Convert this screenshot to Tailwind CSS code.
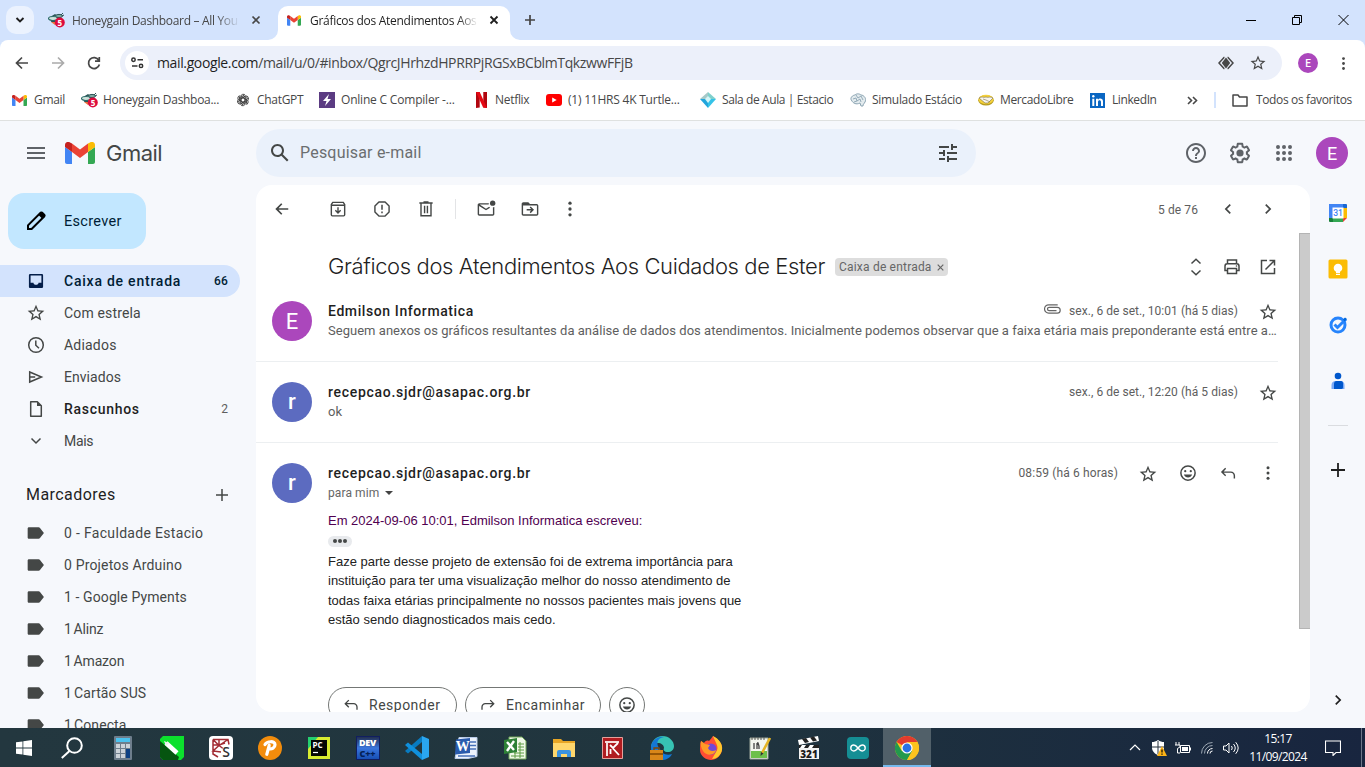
<!DOCTYPE html>
<html lang="pt-BR">
<head>
<meta charset="utf-8">
<title>Gmail</title>
<script src="https://cdn.jsdelivr.net/npm/@tailwindcss/browser@4"></script>
</head>
<body class="w-[1365px] h-[767px] overflow-hidden flex flex-col bg-[#f6f8fc] font-[Roboto,sans-serif] text-[#444746]">
<svg class="hidden">
  <symbol id="gmail" viewBox="0 0 30 22"><path fill="#4285f4" d="M2 22h5V10L0 5v15c0 1.100.9 2 2 2z"/><path fill="#34a853" d="M23 22h5c1.100 0 2-.9 2-2V5l-7 5z"/><path fill="#fbbc04" d="M23 1.500V10l7-5V3c0-2.800-3-4-5-2.600z"/><path fill="#ea4335" d="M7 10V1.500l8 6 8-6V10l-8 6z"/><path fill="#c5221f" d="M0 3v2l7 5V1.500L5 .4C3-1 0 .2 0 3z"/></symbol>
  <symbol id="star" viewBox="0 0 24 24"><path d="M22 9.240l-7.190-.62L12 2 9.190 8.630 2 9.240l5.460 4.730L5.820 21 12 17.270 18.180 21l-1.630-7.030L22 9.240zM12 15.400l-3.760 2.270 1-4.280-3.320-2.880 4.380-.38L12 6.100l1.710 4.040 4.380.38-3.320 2.880 1 4.280L12 15.400z"/></symbol>
  <symbol id="label" viewBox="0 0 24 24"><path d="M3.500 5h11.600c.7 0 1.300.3 1.700.9L21.500 12l-4.700 6.100c-.4.600-1 .9-1.700.9H3.500c-1.100 0-1.500-.9-1.500-1.500v-11C2 5.700 2.600 5 3.500 5z"/></symbol>
  <symbol id="more" viewBox="0 0 24 24"><circle cx="12" cy="5" r="2"/><circle cx="12" cy="12" r="2"/><circle cx="12" cy="19" r="2"/></symbol>
  <symbol id="back" viewBox="0 0 24 24"><path d="M19.500 11H7.830l4.590-4.590L11 5l-7 7 7 7 1.410-1.410L7.830 13H19.500v-2z"/></symbol>
  <symbol id="smile" viewBox="0 0 24 24"><path d="M12 1.500a10.500 10.500 0 100 21 10.500 10.500 0 000-21zm0 19a8.500 8.500 0 110-17 8.500 8.500 0 010 17z"/><circle cx="8.300" cy="9.500" r="1.500"/><circle cx="15.700" cy="9.500" r="1.500"/><path d="M6.500 14h11c-.9 2.400-3 4-5.500 4s-4.600-1.600-5.500-4z"/></symbol>
  <symbol id="reply" viewBox="0 0 24 24"><path d="M8 4L2 10l6 6 1.400-1.400L5.800 11H16c2.200 0 4 1.800 4 4v4h2v-4c0-3.300-2.700-6-6-6H5.800l3.600-3.600z"/></symbol>
  <symbol id="left" viewBox="0 0 24 24"><path d="M15.410 7.410L14 6l-6 6 6 6 1.410-1.410L10.830 12z"/></symbol>
  <symbol id="right" viewBox="0 0 24 24"><path d="M8.590 16.590L13.170 12 8.590 7.410 10 6l6 6-6 6z"/></symbol>
  <symbol id="bee" viewBox="0 0 17 16"><path d="M2 6l5-3 3 2 4-2M3 9l5 1" stroke="#2b5557" stroke-width="1.500" fill="none"/><ellipse cx="5" cy="6.500" rx="4.500" ry="2" fill="#cfe3dc" stroke="#2c6b69" stroke-width="1.200"/><ellipse cx="11" cy="4" rx="3.500" ry="1.600" fill="#7fa9a2" stroke="#2b5557" stroke-width="1"/><path d="M13 3l2-2M14 4l2-1" stroke="#2b5557" stroke-width="1"/><path d="M3 10l4 3 2-3z" fill="#e9713b"/><circle cx="11.800" cy="10.500" r="5" fill="#dd0b3d"/><text x="11.800" y="13.500" font-family="Open Sans" font-size="8" font-weight="700" fill="#fff" text-anchor="middle">5</text></symbol>
</svg>

<!-- Tab strip -->
<header class="h-10 shrink-0 flex bg-[#d3e3fd] pt-[6px] font-['Open_Sans',sans-serif] text-[12px]">
  <button class="ml-[6px] w-7 h-7 rounded-[10px] bg-[#ebf2fe] flex items-center justify-center"><svg class="w-[10px] h-[8px]" viewBox="0 0 10 8"><path d="M1.500 2L5 5.500 8.500 2" fill="none" stroke="#1f1f1f" stroke-width="1.900"/></svg></button>
  <div class="w-[230px] ml-[14px] h-7 flex items-center">
    <svg class="w-[17px] h-4 shrink-0"><use href="#bee"/></svg>
    <span class="ml-[7px] pt-[2px] w-[168px] overflow-hidden whitespace-nowrap tracking-[-0.32px] text-[#474747] [mask-image:linear-gradient(to_right,black_86%,transparent)]">Honeygain Dashboard – All You</span>
    <svg class="ml-[11px] w-[10px] h-[10px]" viewBox="0 0 10 10"><path d="M1.500 1.500l7 7M8.500 1.500l-7 7" stroke="#474747" stroke-width="1.700"/></svg>
  </div>
  <div class="relative w-[232px] h-[34px] rounded-t-[10px] bg-white flex items-center pb-[6px] pl-[9px]">
    <svg class="absolute left-[-10px] bottom-0 w-[10px] h-[10px]"><path d="M10 0v10H0A10 10 0 0010 0z" fill="#fff"/></svg>
    <svg class="absolute right-[-10px] bottom-0 w-[10px] h-[10px]"><path d="M0 0v10h10A10 10 0 010 0z" fill="#fff"/></svg>
    <svg class="w-[14px] h-[11px] shrink-0"><use href="#gmail"/></svg>
    <span class="ml-[9px] pt-[2px] w-[168px] overflow-hidden whitespace-nowrap tracking-[-0.29px] text-[#1f1f1f] [mask-image:linear-gradient(to_right,black_88%,transparent)]">Gráficos dos Atendimentos Aos</span>
    <svg class="ml-[11px] w-[10px] h-[10px]" viewBox="0 0 10 10"><path d="M1.500 1.500l7 7M8.500 1.500l-7 7" stroke="#1f1f1f" stroke-width="1.800"/></svg>
  </div>
  <svg class="ml-[14px] mt-[8px] w-3 h-3" viewBox="0 0 12 12"><path d="M6 1v10M1 6h10" stroke="#444" stroke-width="1.700"/></svg>
  <div class="ml-auto flex pt-[8px] pr-[16px] gap-[35px]" >
    <svg class="w-[11px] h-3" viewBox="0 0 11 12"><path d="M0 6.500h10" stroke="#000"/></svg>
    <svg class="w-[11px] h-3" viewBox="0 0 11 12"><path d="M.5 3.500h7v7h-7zM2.500 3.500v-2h7v7h-2" fill="none" stroke="#000"/></svg>
    <svg class="w-[11px] h-3" viewBox="0 0 11 12"><path d="M.5 1l10 10M10.500 1l-10 10" stroke="#000"/></svg>
  </div>
</header>

<div class="h-10 shrink-0 bg-[#d3e3fd]">
<!-- Address bar -->
<div class="h-10 rounded-t-[8px] bg-white flex items-center pt-[6px]">
  <svg class="ml-[14px] w-4 h-4" viewBox="0 0 16 16"><path d="M14 8H3M8 2.500L2.500 8 8 13.500" fill="none" stroke="#474747" stroke-width="1.700"/></svg>
  <svg class="ml-5 w-4 h-4" viewBox="0 0 16 16"><path d="M2 8h11M8 2.500L13.500 8 8 13.500" fill="none" stroke="#ababab" stroke-width="1.700"/></svg>
  <svg class="ml-5 w-4 h-4" viewBox="0 0 16 16"><path d="M12.800 5.200A5.500 5.500 0 1013.400 9.500M13.300 2v4.200H9" fill="none" stroke="#474747" stroke-width="1.700"/></svg>
  <div class="ml-[18px] w-[1162px] h-[34px] rounded-full bg-[#ecf0fa] flex items-center pl-[5px] pr-[15px]">
    <span class="w-6 h-6 rounded-full bg-white flex items-center justify-center"><svg class="w-[13px] h-3" viewBox="0 0 13 12" fill="none" stroke="#333" stroke-width="1.500"><circle cx="2.500" cy="2.800" r="1.700"/><path d="M6.500 2.800H12M1 8.900h5.500"/><circle cx="10" cy="8.900" r="1.700"/></svg></span>
    <span class="ml-2 pb-px text-[14px] font-['Open_Sans',sans-serif] tracking-[-0.37px] whitespace-nowrap text-[#474747]"><span class="text-[#1f1f1f]">mail.google.com</span>/mail/u/0/#inbox/QgrcJHrhzdHPRRPjRGSxBCblmTqkzwwFFjB</span>
    <svg class="ml-auto w-4 h-[14px]" viewBox="0 0 16 14"><path d="M6.500 1.500H6L1 7l5 5.500h.500M9.500 1.500h.500L15 7l-5 5.500h-.500" fill="none" stroke="#474747" stroke-width="1.500"/><path d="M8 1.500L12.200 7 8 12.500 3.800 7z" fill="#474747"/></svg>
    <svg class="ml-[15px] w-[18px] h-[18px] fill-[#474747]"><use href="#star"/></svg>
  </div>
  <span class="ml-[16px] w-5 h-5 rounded-full bg-[#ab47bc] text-white text-[10px] font-medium flex items-center justify-center">E</span>
  <svg class="ml-[17px] w-[17px] h-[17px] fill-[#474747]"><use href="#more"/></svg>
</div>
</div>

<!-- Bookmarks -->
<nav class="h-[41px] shrink-0 bg-white border-b border-[#dfe1e0] flex items-center pl-3 font-['Open_Sans',sans-serif] text-[12px] text-[#474747] whitespace-nowrap tracking-[-0.3px]">
  <div class="w-[69px] flex items-center gap-[7px]"><svg class="w-[15px] h-[11px]"><use href="#gmail"/></svg>Gmail</div>
  <div class="w-[155px] flex items-center gap-[5px]"><svg class="w-[17px] h-4"><use href="#bee"/></svg>Honeygain Dashboa...</div>
  <div class="w-[83px] flex items-center gap-[7px]"><svg class="w-[14px] h-[14px]" viewBox="0 0 14 14" fill="none" stroke="#3d3d3d" stroke-width=".95"><g id="petal"><path d="M4.800 8.300V3.800a2.500 2.500 0 014.600-1.400M4.800 6L8.600 3.800l3.200 1.900"/></g><g transform="rotate(60 7 7)"><use href="#petal"/></g><g transform="rotate(120 7 7)"><use href="#petal"/></g><g transform="rotate(180 7 7)"><use href="#petal"/></g><g transform="rotate(240 7 7)"><use href="#petal"/></g><g transform="rotate(300 7 7)"><use href="#petal"/></g></svg>ChatGPT</div>
  <div class="w-[155px] flex items-center gap-[6px] tracking-[-0.2px]"><svg class="w-4 h-4" viewBox="0 0 16 16"><path d="M0 0h16v16H0z" fill="#5b3b82"/><path d="M10 2L4 9h3.500L6 14l6-7H8.500z" fill="#fff"/></svg>Online C Compiler -...</div>
  <div class="w-[72px] flex items-center gap-[8px]"><svg class="ml-[2px] w-[11px] h-4" viewBox="0 0 11 16"><path d="M0 0h3.700v15.600L0 16zM7.300 0H11v16l-3.700-.4z" fill="#b1060f"/><path d="M0 0h3.700L11 16l-3.900-.5z" fill="#e50914"/></svg>Netflix</div>
  <div class="w-[154px] flex items-center gap-[6px] tracking-[-0.22px]"><svg class="w-4 h-3" viewBox="0 0 16 12"><rect width="16" height="12" rx="3" fill="#f00"/><path d="M6.200 3.500v5L10.700 6z" fill="#fff"/></svg>(1) 11HRS 4K Turtle...</div>
  <div class="w-[150px] flex items-center gap-[6px] tracking-[-0.4px]"><svg class="w-4 h-4" viewBox="0 0 16 16"><path d="M8 0l8 7H8z" fill="#7fd0cd"/><path d="M8 0v7H0z" fill="#a5c9c8"/><path d="M0 7h8v9z" fill="#22a6dd"/><path d="M16 7H8v9z" fill="#35c3e8"/><path d="M5 7l3-3 3 3-3 4z" fill="#d4f6f8"/></svg>Sala de Aula | Estacio</div>
  <div class="w-[128px] flex items-center gap-[6px]"><svg class="w-4 h-[14px]" viewBox="0 0 16 14"><path d="M2 8C-1 5 3 2 5 2c2-2 5-1 6 0 3 0 6 4 4 7-1 2-2 2-2 4h-2l-1-3C6 12 3 10 2 8z" fill="#e3ebee" stroke="#8ba4b2"/><path d="M3 6l3-1 1 3 3-2 1 3M6 2l2 3 3-2 2 4M4 9l3-1" fill="none" stroke="#8ba4b2" stroke-width=".9"/></svg>Simulado Estácio</div>
  <div class="w-[112px] flex items-center gap-[6px] tracking-[-0.36px]"><svg class="w-4 h-3" viewBox="0 0 16 12"><ellipse cx="8" cy="6.300" rx="7.800" ry="5.300" fill="#b59b20"/><ellipse cx="8" cy="5.500" rx="7.500" ry="4.700" fill="#f5d13a"/><path d="M1 4c3-2 4 0 7-1 3 1 4-1 7 1L10 9H7z" fill="#f8f5ed" stroke="#7a6e49" stroke-width=".6"/><path d="M5 5l3 1 4 2" fill="none" stroke="#7a6e49" stroke-width=".6"/></svg>MercadoLibre</div>
  <div class="w-[97px] flex items-center gap-[7px] tracking-[-0.4px]"><svg class="w-[15px] h-[15px]" viewBox="0 0 15 15"><path d="M0 0h15v15H0z" fill="#0a66c2"/><path d="M2.300 5.700h2V13h-2zM6 5.700h2v1c1.100-1.700 5-1.700 5 1.800V13h-2V9c0-2.200-3-2.200-3 0v4H6z" fill="#fff"/><circle cx="3.300" cy="3.200" r="1.200" fill="#fff"/></svg>LinkedIn</div>
  <svg class="w-[11px] h-[9px]" viewBox="0 0 11 9"><path d="M1 1l3.500 3.500L1 8M6 1l3.500 3.500L6 8" fill="none" stroke="#474747" stroke-width="1.600"/></svg>
  <span class="ml-[16px] w-[2px] h-4 bg-[#d3e3fd]"></span>
  <svg class="ml-[16px] w-4 h-[13px]" viewBox="0 0 16 13"><path d="M1 1h5l1.500 2H15v9H1z" fill="none" stroke="#474747" stroke-width="1.500" stroke-linejoin="round"/></svg>
  <span class="ml-2 tracking-[-0.36px]">Todos os favoritos</span>
</nav>

<!-- Gmail -->
<main class="h-[607px] shrink-0 flex overflow-hidden">
  <aside class="w-[256px] shrink-0 flex flex-col text-[14px]">
    <div class="h-16 shrink-0 flex items-center pl-[27px]">
      <svg class="w-[18px] h-3" viewBox="0 0 18 12"><path d="M0 1h18M0 6h18M0 11h18" stroke="#5f6368" stroke-width="2"/></svg>
      <svg class="ml-5 w-[30px] h-[22px]"><use href="#gmail"/></svg>
      <span class="ml-[11px] text-[22px] tracking-[-0.5px] text-[#444746] font-[Inter,sans-serif]">Gmail</span>
    </div>
    <button class="ml-2 mt-2 w-[138px] h-14 shrink-0 rounded-2xl bg-[#c2e7ff] flex items-center pl-4 text-[#001d35]">
      <svg class="w-6 h-6" viewBox="0 0 24 24"><path fill="none" stroke="#000" stroke-width="2" d="M4 20v-3.600L16.800 3.600q.6-.4 1.200 0L20.400 6q.5.600 0 1.200L7.600 20z"/><path d="M14.500 6l3.500 3.500 3-3L17.500 3z"/></svg>
      <span class="ml-4 mt-px tracking-[0.3px] text-[14.500px]">Escrever</span>
    </button>
    <ul class="mt-4 shrink-0 w-[240px]">
      <li class="h-8 rounded-r-full bg-[#d3e3fd] flex items-center pl-[26px] pr-3 text-[#001d35]"><svg class="w-5 h-5" viewBox="0 0 24 24"><path fill="#041e49" d="M19 3.500H5A1.500 1.500 0 003.500 5v14c0 .8.700 1.500 1.500 1.500h14a1.500 1.500 0 001.500-1.500V5A1.500 1.500 0 0019 3.500zm-.5 10.500H15c0 1.700-1.300 2.500-3 2.500S9 15.700 9 14H5.500V5.500h13z"/></svg><span class="ml-[18px] font-medium tracking-[0.77px]">Caixa de entrada</span><span class="ml-auto text-[12px] font-medium tracking-[0.2px]">66</span></li>
      <li class="h-8 flex items-center pl-[26px]"><svg class="w-5 h-5 fill-[#444746] shrink-0"><use href="#star"/></svg><span class="ml-[18px] tracking-[0.15px]">Com estrela</span></li>
      <li class="h-8 flex items-center pl-[26px]"><svg class="w-5 h-5" viewBox="0 0 20 20" fill="none" stroke="#444746" stroke-width="1.500"><circle cx="10" cy="10" r="7.300"/><path d="M9.800 5.500v4.800l3.200 3"/></svg><span class="ml-[18px] tracking-[0.2px]">Adiados</span></li>
      <li class="h-8 flex items-center pl-[26px]"><svg class="w-5 h-5" viewBox="0 0 20 20"><path d="M3.700 5l11.800 5-11.800 5V5zM3.700 10h5.500" fill="none" stroke="#444746" stroke-width="1.500"/></svg><span class="ml-[18px] tracking-[0.05px]">Enviados</span></li>
      <li class="h-8 flex items-center pl-[26px] pr-3 text-[#1f1f1f]"><svg class="w-5 h-5" viewBox="0 0 20 20"><path d="M4.700 2.700h6.600l4 4v10.600H4.700z" fill="none" stroke="#444746" stroke-width="1.500" stroke-linejoin="round"/><path d="M11 2.500V7h4.500z" fill="#444746"/></svg><span class="ml-[18px] font-medium tracking-[0.7px]">Rascunhos</span><span class="ml-auto text-[12px] text-[#5e5e5e]">2</span></li>
      <li class="h-8 flex items-center pl-[26px]"><svg class="w-5 h-5" viewBox="0 0 20 20"><path d="M5.500 7.500l4.500 4.500 4.500-4.500" fill="none" stroke="#444746" stroke-width="1.500"/></svg><span class="ml-[18px] tracking-[-0.3px]">Mais</span></li>
    </ul>
    <div class="h-[60px] shrink-0 flex items-center pt-[16px] pl-[26px] pr-7 text-[16px] text-[#1f1f1f]"><span class="tracking-[0.45px]">Marcadores</span><svg class="ml-auto w-3 h-3" viewBox="0 0 12 12"><path d="M6 0v12M0 6h12" stroke="#444746" stroke-width="1.500"/></svg></div>
    <ul class="shrink-0 text-[14px] tracking-[0.1px]">
      <li class="h-8 flex items-center pl-[26px] gap-[18px] tracking-[0.32px]"><svg class="w-5 h-5 fill-[#444746]"><use href="#label"/></svg>0 - Faculdade Estacio</li>
      <li class="h-8 flex items-center pl-[26px] gap-[18px] tracking-[0.16px]"><svg class="w-5 h-5 fill-[#444746]"><use href="#label"/></svg>0 Projetos Arduino</li>
      <li class="h-8 flex items-center pl-[26px] gap-[18px]"><svg class="w-5 h-5 fill-[#444746]"><use href="#label"/></svg>1 - Google Pyments</li>
      <li class="h-8 flex items-center pl-[26px] gap-[18px] [word-spacing:-1.500px] tracking-[-0.15px]"><svg class="w-5 h-5 fill-[#444746]"><use href="#label"/></svg>1 Alinz</li>
      <li class="h-8 flex items-center pl-[26px] gap-[18px] [word-spacing:-1.500px] tracking-[-0.15px]"><svg class="w-5 h-5 fill-[#444746]"><use href="#label"/></svg>1 Amazon</li>
      <li class="h-8 flex items-center pl-[26px] gap-[18px]"><svg class="w-5 h-5 fill-[#444746]"><use href="#label"/></svg><span><span class="[word-spacing:-1.500px]">1 Cartão</span> SUS</span></li>
      <li class="h-8 flex items-center pl-[26px] gap-[18px] [word-spacing:-1.500px]"><svg class="w-5 h-5 fill-[#444746]"><use href="#label"/></svg>1 Conecta</li>
    </ul>
  </aside>

  <div class="flex-1 flex flex-col">
    <div class="h-16 shrink-0 flex items-center">
      <div class="w-[720px] h-12 rounded-full bg-[#eaf1fb] flex items-center pl-3 pr-4">
        <svg class="w-6 h-6" viewBox="0 0 24 24"><path fill="#444746" d="M20.490 19l-5.730-5.730C15.530 12.200 16 10.910 16 9.500 16 5.910 13.090 3 9.500 3S3 5.910 3 9.500 5.910 16 9.500 16c1.410 0 2.700-.47 3.770-1.240L19 20.490 20.490 19zM5 9.500C5 7.010 7.010 5 9.500 5S14 7.010 14 9.500 11.990 14 9.500 14 5 11.990 5 9.500z"/></svg>
        <span class="ml-2 text-[16px] tracking-[0.2px] text-[#6b6e70]">Pesquisar e-mail</span>
        <svg class="ml-auto w-6 h-6" viewBox="0 0 24 24"><path fill="#444746" d="M3 17v2h6v-2H3zM3 5v2h10V5H3zm10 16v-2h8v-2h-8v-2h-2v6h2zM7 9v2H3v2h4v2h2V9H7zm14 4v-2H11v2h10zm-6-4h2V7h4V5h-4V3h-2v6z"/></svg>
      </div>
      <svg class="ml-52 w-6 h-6 shrink-0" viewBox="0 0 24 24"><path fill="#5f6368" d="M11 18h2v-2h-2v2zm1-16C6.480 2 2 6.480 2 12s4.480 10 10 10 10-4.480 10-10S17.520 2 12 2zm0 18c-4.410 0-8-3.590-8-8s3.590-8 8-8 8 3.590 8 8-3.590 8-8 8zm0-14c-2.210 0-4 1.790-4 4h2c0-1.100.9-2 2-2s2 .9 2 2c0 2-3 1.750-3 5h2c0-2.250 3-2.500 3-5 0-2.210-1.790-4-4-4z"/></svg>
      <svg class="ml-5 w-6 h-6 shrink-0" viewBox="0 0 24 24"><path fill="#5f6368" d="M13.850 22.250h-3.700c-.74 0-1.360-.54-1.450-1.270l-.27-1.890c-.27-.14-.53-.29-.79-.46l-1.800.72c-.7.260-1.470-.03-1.810-.65L2.200 15.530c-.35-.66-.2-1.440.36-1.880l1.530-1.190c-.01-.15-.02-.3-.02-.46 0-.15.01-.31.020-.46l-1.520-1.190c-.59-.45-.74-1.260-.37-1.880l1.850-3.190c.34-.62 1.110-.9 1.790-.63l1.810.73c.26-.17.52-.32.78-.46l.27-1.910c.09-.7.71-1.250 1.440-1.250h3.700c.74 0 1.360.54 1.450 1.270l.27 1.890c.27.140.53.290.79.460l1.800-.72c.71-.26 1.480.03 1.820.65l1.840 3.180c.36.660.2 1.440-.36 1.880l-1.520 1.190c.01.150.02.300.020.460s-.01.310-.02.460l1.520 1.190c.56.450.72 1.230.37 1.860l-1.860 3.220c-.34.620-1.110.9-1.800.63l-1.800-.72c-.26.170-.52.320-.78.460l-.27 1.910c-.1.680-.72 1.220-1.460 1.220zm-3.230-2h2.760l.37-2.550.53-.22c.44-.18.88-.44 1.340-.78l.45-.34 2.380.96 1.380-2.400-2.030-1.580.07-.56c.03-.26.06-.51.060-.78s-.03-.53-.06-.78l-.07-.56 2.030-1.580-1.390-2.400-2.390.96-.45-.35c-.42-.32-.87-.58-1.330-.77l-.52-.22-.37-2.550h-2.760l-.37 2.550-.53.210c-.44.190-.88.440-1.340.79l-.45.330-2.380-.95-1.390 2.390 2.030 1.580-.07.560a7 7 0 00-.06.790c0 .26.020.53.060.78l.07.560-2.030 1.580 1.380 2.400 2.390-.96.450.35c.43.330.86.580 1.330.77l.53.220z"/><circle cx="12" cy="12" r="3.600" fill="#5f6368"/></svg>
      <svg class="ml-5 w-6 h-6 shrink-0" viewBox="0 0 24 24"><path fill="none" stroke="#5f6368" stroke-width="4" stroke-linecap="round" stroke-dasharray="0 6" d="M6 6h12.100M6 12h12.100M6 18h12.100"/></svg>
      <span class="ml-5 w-8 h-8 rounded-full bg-[#ab47bc] text-white text-[18px] flex items-center justify-center pt-px">E</span>
    </div>

    <div class="flex h-[543px]">
      <section class="w-[1054px] h-[527px] rounded-2xl bg-white overflow-hidden flex flex-col">
        <div class="h-12 shrink-0 flex items-center pl-4 fill-[#444746] text-[#5e5e5e] text-[12px]">
          <svg class="w-5 h-5"><use href="#back"/></svg>
          <svg class="ml-9 w-5 h-5" viewBox="0 0 24 24" fill="none" stroke="#444746" stroke-width="1.700"><path d="M4 7.500V19q0 1.200 1.200 1.200h13.600Q20 20.200 20 19V6.500L18.300 4H5.700L4 6.500v1h16"/><path d="M12 10v7M8.800 13.500L12 16.700l3.200-3.200"/></svg>
          <svg class="ml-6 w-5 h-5" viewBox="0 0 24 24"><path fill="none" stroke="#444746" stroke-width="1.700" d="M8.300 3.500h7.400l4.800 4.800v7.400l-4.800 4.800H8.300l-4.800-4.800V8.300z" stroke-linejoin="round"/><path d="M11.100 7h1.800v6h-1.800zM11.100 15h1.800v2h-1.800z"/></svg>
          <svg class="ml-6 w-5 h-5" viewBox="0 0 24 24" fill="none" stroke="#444746" stroke-width="1.700"><path d="M6 5v15h12V5M4 4.800h16M9 3.500h6M10.300 8v9M13.700 8v9"/></svg>
          <span class="ml-[19px] w-px h-5 bg-[#e3e4e6]"></span>
          <svg class="ml-5 w-5 h-5" viewBox="0 0 24 24"><path d="M15.500 5H4c-1.100 0-2 .9-2 2v11c0 1.100.9 2 2 2h16c1.100 0 2-.9 2-2V9.500c-.6.300-1.100.5-1.700.5v8.300H3.700V8.500L12 13.500l5-3.100c-.6-.4-1-1-1.300-1.200L12 11.700 4.500 6.700h10.700c0-.6.100-1.100.3-1.700z"/><circle cx="20" cy="5" r="3.200"/></svg>
          <svg class="ml-6 w-5 h-5" viewBox="0 0 24 24"><path d="M20 6h-8l-2-2H4c-1.100 0-2 .9-2 2v12c0 1.100.9 2 2 2h16c1.100 0 2-.9 2-2V8c0-1.100-.9-2-2-2zm.3 12.300H3.700V7.700h16.600v10.600zM12.800 17l4-4-4-4-1.200 1.300 1.800 1.800H8v1.800h5.400l-1.800 1.800z"/></svg>
          <svg class="ml-5 w-5 h-5"><use href="#more"/></svg>
          <span class="ml-auto mt-px tracking-[0.1px]">5 de 76</span>
          <svg class="ml-5 w-5 h-5"><use href="#left"/></svg>
          <svg class="ml-5 mr-8 w-5 h-5"><use href="#right"/></svg>
        </div>

        <div class="flex-1 flex min-h-0">
        <div class="w-[1022px] shrink-0">
          <div class="pt-5 h-12 flex items-center pl-[72px]">
            <h1 class="-mt-[2px] text-[22px] font-[Inter,sans-serif] font-light tracking-[-0.38px] text-[#1f1f1f] whitespace-nowrap w-[507px]">Gráficos dos Atendimentos Aos Cuidados de Ester</h1>
            <span class="h-[18px] w-[113px] rounded-[4px] bg-[#ddd] text-[#666] text-[12px] flex items-center pl-1 whitespace-nowrap tracking-[0.2px]">Caixa de entrada<svg class="ml-[5px] mt-px w-[7px] h-[7px]" viewBox="0 0 7 7"><path d="M.7.7l5.600 5.600M6.300.7L.7 6.300" stroke="#666" stroke-width="1.200"/></svg></span>
            <svg class="ml-auto w-5 h-5" viewBox="0 0 20 20"><path d="M5.500 6.500L10 2.200l4.500 4.300M5.500 13.500l4.500 4.300 4.500-4.300" fill="none" stroke="#444746" stroke-width="1.500"/></svg>
            <svg class="ml-4 w-5 h-5" viewBox="0 0 20 20"><path d="M5.500 6.500V3h9v3.500M5.500 13.500H3V9.200C3 7.600 4 6.700 5.200 6.700h9.600C16 6.700 17 7.600 17 9.200v4.300h-2.500M5.500 11.500h9v5h-9z" fill="none" stroke="#444746" stroke-width="1.500"/><circle cx="14.500" cy="9" r=".8" fill="#444746"/></svg>
            <svg class="ml-4 w-5 h-5" viewBox="0 0 20 20"><path d="M9 3.500H3.500v13h13V11M11.500 3.500h5v5M16.500 3.500l-9 9" fill="none" stroke="#444746" stroke-width="1.500"/></svg>
          </div>

          <article class="h-[81px] border-b border-[#eceff1] flex pt-5 pl-4">
            <span class="w-10 h-10 rounded-full bg-[#ab47bc] text-white text-[22px] flex items-center justify-center shrink-0">E</span>
            <div class="ml-4 w-[950px]">
              <div class="h-5 flex items-center"><b class="text-[14px] font-medium tracking-[0.6px] text-[#1f1f1f]">Edmilson Informatica</b>
                <svg class="ml-auto mb-1 w-[17px] h-[10px]" viewBox="0 0 17 10"><path d="M12.500 6.700H5.200a1.700 1.700 0 010-3.400h8.100a2.900 2.900 0 010 5.800H4.700A4.100 4.100 0 014.700.8h9" fill="none" stroke="#666" stroke-width="1.200"/></svg>
                <span class="ml-2 text-[12px] tracking-[0.05px] text-[#5e5e5e]">sex., 6 de set., 10:01 (há 5 dias)</span><svg class="ml-5 mt-px w-5 h-5 fill-[#444746]"><use href="#star"/></svg></div>
              <p class="h-5 leading-[19px] text-[13px] text-[#5e5e5e] tracking-[0.03px] whitespace-nowrap">Seguem anexos os gráficos resultantes da análise de dados dos atendimentos. Inicialmente podemos observar que a faixa etária mais preponderante está entre a…</p>
            </div>
          </article>

          <article class="h-[81px] border-b border-[#eceff1] flex pt-5 pl-4">
            <span class="w-10 h-10 rounded-full bg-[#5c6bc0] text-white text-[22px] font-medium pb-[2px] flex items-center justify-center shrink-0">r</span>
            <div class="ml-4 w-[950px]">
              <div class="h-5 flex items-center"><b class="text-[14px] font-medium tracking-[0.7px] text-[#1f1f1f]">recepcao.sjdr@asapac.org.br</b>
                <span class="ml-auto text-[12px] tracking-[0.05px] text-[#5e5e5e]">sex., 6 de set., 12:20 (há 5 dias)</span><svg class="ml-5 mt-px w-5 h-5 fill-[#444746]"><use href="#star"/></svg></div>
              <p class="h-5 leading-[19px] text-[13px] text-[#5e5e5e]">ok</p>
            </div>
          </article>

          <article class="flex pt-5 pl-4">
            <span class="w-10 h-10 rounded-full bg-[#5c6bc0] text-white text-[22px] font-medium pb-[2px] flex items-center justify-center shrink-0">r</span>
            <div class="ml-4 w-[950px]">
              <div class="h-5 flex items-center fill-[#444746]"><b class="text-[14px] font-medium tracking-[0.7px] text-[#1f1f1f]">recepcao.sjdr@asapac.org.br</b>
                <span class="ml-auto text-[12px] tracking-[0.14px] text-[#5e5e5e]">08:59 (há 6 horas)</span><svg class="ml-5 mt-px w-5 h-5"><use href="#star"/></svg><svg class="ml-5 w-5 h-5" viewBox="0 0 20 20"><use href="#smile" x="1" y="1" width="18" height="18"/></svg><svg class="ml-5 w-5 h-5" viewBox="0 0 20 20"><use href="#reply" x="1.500" y="2" width="17" height="17"/></svg><svg class="ml-5 w-5 h-5" viewBox="0 0 20 20"><use href="#more" x="1" y="1" width="18" height="18"/></svg></div>
              <div class="h-5 flex items-center text-[12px] tracking-[0.1px] text-[#666]">para mim<svg class="ml-[6px] w-2 h-1" viewBox="0 0 8 4"><path d="M0 0h8L4 4z" fill="#444"/></svg></div>
              <div class="mt-[8px] font-['Liberation_Sans',sans-serif] text-[13px] leading-[19.500px] text-[#222]">
                <p class="text-[#500050]">Em 2024-09-06 10:01, Edmilson Informatica escreveu:</p>
                <span class="mt-[5px] mb-[5px] w-6 h-[11px] rounded-full bg-[#e8eaed] flex items-center justify-center gap-[1px]"><i class="w-1 h-1 rounded-full bg-[#444746]"></i><i class="w-1 h-1 rounded-full bg-[#444746]"></i><i class="w-1 h-1 rounded-full bg-[#444746]"></i></span>
                <p class="whitespace-nowrap">Faze parte desse projeto de extensão foi de extrema importância para<br>instituição para ter uma visualização melhor do nosso atendimento de<br>todas faixa etárias principalmente no nossos pacientes mais jovens que<br>estão sendo diagnosticados mais cedo.</p>
              </div>
              <div class="mt-[57px] flex gap-2 text-[14px] tracking-[0.5px] fill-[#444746]">
                <span class="w-[129px] h-9 rounded-full border border-[#747775] flex items-center pl-[14px]"><svg class="mt-px w-4 h-4"><use href="#reply"/></svg><span class="ml-[10px] mt-px">Responder</span></span>
                <span class="w-[136px] h-9 rounded-full border border-[#747775] flex items-center pl-[14px]"><svg class="mt-px w-4 h-4 -scale-x-100"><use href="#reply"/></svg><span class="ml-[10px] mt-px">Encaminhar</span></span>
                <span class="w-9 h-9 rounded-full border border-[#747775] flex items-center justify-center"><svg class="w-[18px] h-[18px]"><use href="#smile"/></svg></span>
              </div>
            </div>
          </article>
        </div>
        <div class="ml-auto w-[11px] h-[396px] bg-[#cbcbcb] border border-r-0 border-[#b4b4b4]"></div>
        </div>
      </section>

      <aside class="w-[55px] flex flex-col items-center pt-[18px] pl-px">
        <svg class="w-5 h-5" viewBox="0 0 20 20"><path d="M1 1h14v4H5v10H1z" fill="#4285f4"/><path d="M15 1h3a1 1 0 011 1v3h-4z" fill="#1967d2"/><path d="M15 5h4v10h-4z" fill="#fbbc04"/><path d="M5 15h10v4H5z" fill="#34a853"/><path d="M1 15h4v4H2a1 1 0 01-1-1z" fill="#188038"/><path d="M15 15h4l-4 4z" fill="#ea4335"/><path d="M4.500 4.500h11v11h-11z" fill="#fff"/><text x="10" y="13" font-family="Roboto" font-size="8.500" font-weight="500" fill="#4285f4" text-anchor="middle">31</text></svg>
        <svg class="mt-9 w-5 h-5" viewBox="0 0 20 20"><rect x=".5" y=".5" width="19" height="19" rx="1.500" fill="#fbbc04"/><circle cx="10" cy="9" r="4.300" fill="#fff"/><path d="M8 12h4v2H8zM8 14.700h4V16H8z" fill="#fff"/></svg>
        <svg class="mt-9 w-5 h-5" viewBox="0 0 20 20"><circle cx="10" cy="10" r="7" fill="none" stroke="#2684fc" stroke-width="3"/><path d="M6.500 9.500l3 3L18 4" fill="none" stroke="#2684fc" stroke-width="3"/><path d="M15 4.500l2-2 2 1.500-2.500 2.500z" fill="#0066da"/></svg>
        <svg class="mt-9 w-5 h-5" viewBox="0 0 20 20"><circle cx="10" cy="5" r="3.300" fill="#0057cc"/><path d="M3.500 18v-4c0-2.500 2-4 4-4h5c2 0 4 1.500 4 4v4z" fill="#7baaf7"/><path d="M6 18v-5c0-2 1-3 2.500-3H13c1.500 0 2 1 2 2.500V16c0 1-.5 2-1.500 2z" fill="#0057cc"/></svg>
        <span class="mt-[34px] w-5 h-px bg-[#dadce0]"></span>
        <svg class="mt-[37px] w-[14px] h-[14px]" viewBox="0 0 14 14"><path d="M7 0v14M0 7h14" stroke="#1f1f1f" stroke-width="1.800"/></svg>
        <svg class="mt-[213px] w-5 h-5" viewBox="0 0 24 24"><path fill="#1f1f1f" d="M8.600 16.600L13.200 12 8.600 7.400 10 6l6 6-6 6z"/></svg>
      </aside>
    </div>
  </div>
</main>

<!-- Taskbar -->
<footer class="h-[39px] shrink-0 flex items-stretch bg-linear-to-r from-[#23373f] via-[#20353e] via-50% to-[#18253f] text-white">
  <div class="w-12 flex items-center justify-center"><svg class="w-4 h-4" viewBox="0 0 16 16"><path d="M0 2.300l6.500-.9v6.200H0zM7.300 1.300L16 0v7.600H7.300zM0 8.400h6.500v6.200L0 13.700zM7.300 8.400H16V16l-8.700-1.300z" fill="#fff"/></svg></div>
  <div class="w-[48px] mr-[2px] flex items-center justify-center"><svg class="w-[22px] h-[22px]" viewBox="0 0 22 22"><circle cx="13.500" cy="8.500" r="7.300" fill="none" stroke="#fff" stroke-width="2"/><path d="M8.500 14L.8 21" stroke="#fff" stroke-width="2"/></svg></div>
  <div class="w-[49px] flex items-center justify-center"><svg class="w-[18px] h-6" viewBox="0 0 18 24"><rect width="18" height="24" rx="1" fill="#6e7e8c"/><path d="M2 2h14v4H2z" fill="#4cc2ee"/><path d="M2 8h4v4H2zM7 8h4v4H7zM12 8h4v4h-4zM2 13h4v4H2zM7 13h4v4H7zM2 18h4v4H2zM7 18h4v4H7z" fill="#ccd3d9"/><path d="M12 13h4v9h-4z" fill="#0e4183"/></svg></div>
  <div class="w-[49px] flex items-center justify-center"><svg class="w-6 h-6" viewBox="0 0 24 24"><path d="M3 0h21v21l-3 3H3l-3-3V3z" fill="#0ce02d"/><path d="M0 5l19 16-1 3H3l-3-3z" fill="#065510"/><path d="M6 7l11 10" stroke="#fff" stroke-width="4.500"/><path d="M4 5l2 5 3-3z" fill="#eee"/></svg></div>
  <div class="w-[49px] flex items-center justify-center"><svg class="w-6 h-6" viewBox="0 0 24 24"><rect width="24" height="24" rx="4" fill="#fff"/><path d="M4 3.500h15l1 5M4 3.500V18l5 3M4 3.500l6 6 9-6M10 9.500L4 15l8 1M10 9.500l4 3M10 9.500V4M4 9h6l6-2" fill="none" stroke="#a22b33" stroke-width="1.500"/><text x="17" y="21" font-family="Open Sans" font-size="14" font-weight="600" fill="#333" stroke="#fff" stroke-width="1" paint-order="stroke" text-anchor="middle">S</text></svg></div>
  <div class="w-[49px] flex items-center justify-center"><svg class="w-6 h-6" viewBox="0 0 24 24"><circle cx="12" cy="12" r="12" fill="#f28c0c"/><path d="M8.800 18.300l2.400-9M7 8.500c2-3.500 10-4 10 .3 0 3-3 4.500-6 4" fill="none" stroke="#fff" stroke-width="3.200" stroke-linecap="round"/></svg></div>
  <div class="w-[49px] flex items-center justify-center"><svg class="w-[22px] h-[22px]" viewBox="0 0 22 22"><path d="M0 0h22v22H0z" fill="#d8ec30"/><path d="M0 0h10L0 12z" fill="#25d070"/><path d="M3 3h16v16H3z" fill="#050805"/><text x="4.500" y="11" font-family="Open Sans" font-size="8" font-weight="700" fill="#fff">PC</text><path d="M5 15.500h5" stroke="#fff" stroke-width="1.200"/></svg></div>
  <div class="w-[49px] flex items-center justify-center"><div class="w-6 h-6 border border-[#101e60] bg-linear-to-b from-[#223052] via-[#3a75dd] to-[#174fb5] font-['Open_Sans',sans-serif] font-extrabold text-[9px] leading-[11px] text-center overflow-hidden tracking-[-0.2px]"><span class="block text-white">DEV</span><span class="block text-[#041f57]">C++</span></div></div>
  <div class="w-[49px] flex items-center justify-center"><svg class="w-6 h-6" viewBox="0 0 24 24"><path d="M17 0l7 3v18l-7 3z" fill="#2aa6f0"/><path d="M17 0v6L3 17.500 0 15z" fill="#087bc1"/><path d="M17 24v-6L3 6.500 0 9z" fill="#1090dd"/></svg></div>
  <div class="w-[49px] flex items-center justify-center"><svg class="w-6 h-6" viewBox="0 0 24 24"><path d="M5 1.500h18v19l-9 2H1z" fill="#edf3fc" stroke="#b9cbe8"/><path d="M16 6h6M16 9.500h6M16 13h6M4 20h17" stroke="#4570b8" stroke-width="1.500"/><path d="M2 3.500L16 2v15L1 18.500z" fill="#2a5bad"/><text x="8.700" y="15" font-family="Liberation Serif" font-size="14" font-weight="700" fill="#fff" text-anchor="middle">W</text></svg></div>
  <div class="w-[49px] flex items-center justify-center"><svg class="w-6 h-6" viewBox="0 0 24 24"><path d="M6 1h13l4 4v18H6z" fill="#eff8e7" stroke="#72a75a"/><path d="M8 20h13M11 17h10M15 14h6M15 11h6M15 8h6M12 14v8M17 6v16" stroke="#5d9c42"/><path d="M1 4l13-2v14L1 18z" fill="#2e8136"/><path d="M4 6l7 8M11 5l-7 10" stroke="#fff" stroke-width="2.400"/></svg></div>
  <div class="w-[49px] flex items-center justify-center"><svg class="w-[22px] h-5" viewBox="0 0 22 20"><path d="M0 1h8l2 2h12v16H0z" fill="#e8a625"/><path d="M0 5h22v14H0z" fill="#ffd76c"/><path d="M4 19v-5q0-2 2-2h10q2 0 2 2v5h-4v-3H8v3z" fill="#3b93df"/></svg></div>
  <div class="w-[49px] flex items-center justify-center"><svg class="w-[21px] h-[22px]" viewBox="0 0 21 22"><path d="M.5.5h20v21H.5z" fill="#b01c20" stroke="#e6a09b"/><path d="M3 4h14v2H6v13H4V6H3z" fill="#f6dedc"/><path d="M8 8l3 3 5-5M11 11.500l6 6.500M8.500 17v-5" stroke="#fff" stroke-width="1.800" fill="none"/></svg></div>
  <div class="w-[49px] flex items-center justify-center"><svg class="w-6 h-6" viewBox="0 0 24 24"><path d="M1 12C1 5 6 0 12.500 0 19 0 24 5 24 10c0 4-3 6-6 6-4 0-5-2-4-4 0-3-3-5-6-5-4 0-6 3-7 5z" fill="#37c3b3"/><path d="M1 12C1 4 8 0 14 1c-8 1-8 8-4 12 1 4 6 7 12 5-2 4-6 6-10 6C5 24 1 18 1 12z" fill="#1477d4"/><path d="M0 14h13v10H0z" fill="#d98619"/><path d="M4 14v-2h5v2M0 18h13" fill="none" stroke="#804500" stroke-width="1.300"/></svg></div>
  <div class="w-[49px] flex items-center justify-center"><svg class="w-6 h-6" viewBox="0 0 24 24"><path d="M2 5l3 2c1-2 3-3 5-2 2-2 3-4 4-5 6 4 10 8 9 14-1 6-6 10-11 10S1 20 1 14c0-3 0-6 1-9z" fill="#ff4d34"/><path d="M14 0c6 3 10 8 9 14-1 5-5 9-10 9l4-7c4-5-1-10-3-16z" fill="#ffc72c"/><circle cx="12" cy="13" r="5.500" fill="#7247d6"/><path d="M2 5l4 3 5 1-2 3c1 3 5 4 8 2-1 5-9 7-13 1C2 12 1 8 2 5z" fill="#ff9a26"/></svg></div>
  <div class="w-[49px] flex items-center justify-center"><svg class="w-6 h-6" viewBox="0 0 24 24"><path d="M2 2h18v21H2z" fill="#f3f6ee" stroke="#9da79a"/><path d="M3 15h16v7H3z" fill="#6dc04a"/><path d="M4 1v3M7 1v3M10 1v3M13 1v3M16 1v3" stroke="#555"/><path d="M6 7v6M9 7v6M9 7h1l1 3v3" fill="none" stroke="#444" stroke-width="1.300"/><path d="M22 2l-8 15" stroke="#e5b524" stroke-width="2.600"/><path d="M13 16l-.5 4 3-2.500z" fill="#333"/></svg></div>
  <div class="w-[49px] flex items-center justify-center"><svg class="w-6 h-6" viewBox="0 0 24 24"><path d="M1 4l20-4 1 5L2 9z" fill="#fff"/><path d="M5 3l3 4 4-1-3-4zM13 1.500l3 4 4-1-3-4z" fill="#222"/><path d="M2 9h20v14H2z" fill="#f2f2f2"/><path d="M2 9h20v3H2z" fill="#222"/><path d="M5 9l-2 3h4l2-3zM13 9l-2 3h4l2-3z" fill="#fff"/><text x="12" y="21.500" font-family="Open Sans" font-size="10" font-weight="800" fill="#1c1c1c" text-anchor="middle">321</text></svg></div>
  <div class="w-[50px] flex items-center justify-center"><svg class="w-[22px] h-[22px]" viewBox="0 0 22 22"><rect width="22" height="22" rx="4" fill="#158e94"/><path d="M11 11C9 8.500 8 8 6.800 8a3 3 0 000 6C8 14 9 13.500 11 11s3-3 4.200-3a3 3 0 010 6C14 14 13 13.500 11 11z" fill="none" stroke="#fff" stroke-width="1.400"/></svg></div>
  <div class="w-[48px] bg-[#516069] border-b-2 border-[#76b9ed] flex items-center justify-center pt-[2px]"><svg class="w-6 h-6" viewBox="0 0 24 24"><circle cx="12" cy="12" r="12" fill="#fcc31e"/><path d="M12 12L1.600 6a12 12 0 0120.800 0z" fill="#e33b2e"/><path d="M1.600 6a12 12 0 0010.400 18l5.200-9H6.800z" fill="#23994d"/><path d="M22.400 6A12 12 0 0112 24l5.200-9L12 6z" fill="#fcc31e"/><circle cx="12" cy="12" r="5.600" fill="#fff"/><circle cx="12" cy="12" r="4.400" fill="#2a72e5"/></svg></div>
  <div class="ml-auto flex items-center pr-[3px] font-['Open_Sans',sans-serif] text-[12px]">
    <svg class="w-3 h-[7px]" viewBox="0 0 12 7"><path d="M1 6l5-5 5 5" fill="none" stroke="#fff" stroke-width="1.200"/></svg>
    <svg class="ml-[10px] w-4 h-4" viewBox="0 0 16 16"><path d="M7 0c2 1.500 4 2 6 2v6c0 3-3 6-6 7-3-1-6-4-6-7V2c2 0 4-.5 6-2z" fill="#fff"/><path d="M7 1v13M1 7h12" stroke="#24313d"/><path d="M11 6l5 10H6z" fill="#fcb316"/><path d="M11 9.500v3M11 13.500v1.200" stroke="#000" stroke-width="1.200"/></svg>
    <svg class="ml-[8px] w-4 h-3" viewBox="0 0 16 12"><path d="M5.500 3.500h9v7h-9z" fill="none" stroke="#fff"/><path d="M7 5h6v4H7zM14.500 5.500H16v3h-1.500z" fill="#fff"/><path d="M1 0v3M4 0v3M0 3h5v2L2.500 6.500V11H5" fill="none" stroke="#fff"/></svg>
    <svg class="ml-[10px] w-3 h-3" viewBox="0 0 12 12" fill="none" stroke="#9da8b4" stroke-width="1"><path d="M.5 11.500a11 11 0 0111-11M3.500 11.500a8 8 0 018-8"/><path d="M6.500 11.500a5 5 0 015-5M9 11.500a2.500 2.500 0 012.500-2.500" stroke="#fff"/></svg>
    <svg class="ml-[10px] w-[17px] h-[14px]" viewBox="0 0 17 14" fill="none" stroke="#fff" stroke-width="1"><path d="M.5 5h2.500l3-3v10l-3-3H.5zM8.500 5q1.500 2 0 4M10.500 3q3.500 4 0 8M12.700 1.200q5 5.800 0 11.600"/></svg>
    <div class="ml-[8px] w-[60px] text-center leading-[18px] text-[12px] tracking-[-0.6px]">15:17<br>11/09/2024</div>
    <svg class="ml-[17px] w-4 h-4" viewBox="0 0 16 16"><path d="M.5 1h15v11.500h-4.500L8 15.500V12.500H.5z" fill="none" stroke="#fff" stroke-width="1.100"/></svg>
    <span class="ml-5 w-px h-[39px] bg-[#6c7689]"></span>
  </div>
</footer>
</body>
</html>
